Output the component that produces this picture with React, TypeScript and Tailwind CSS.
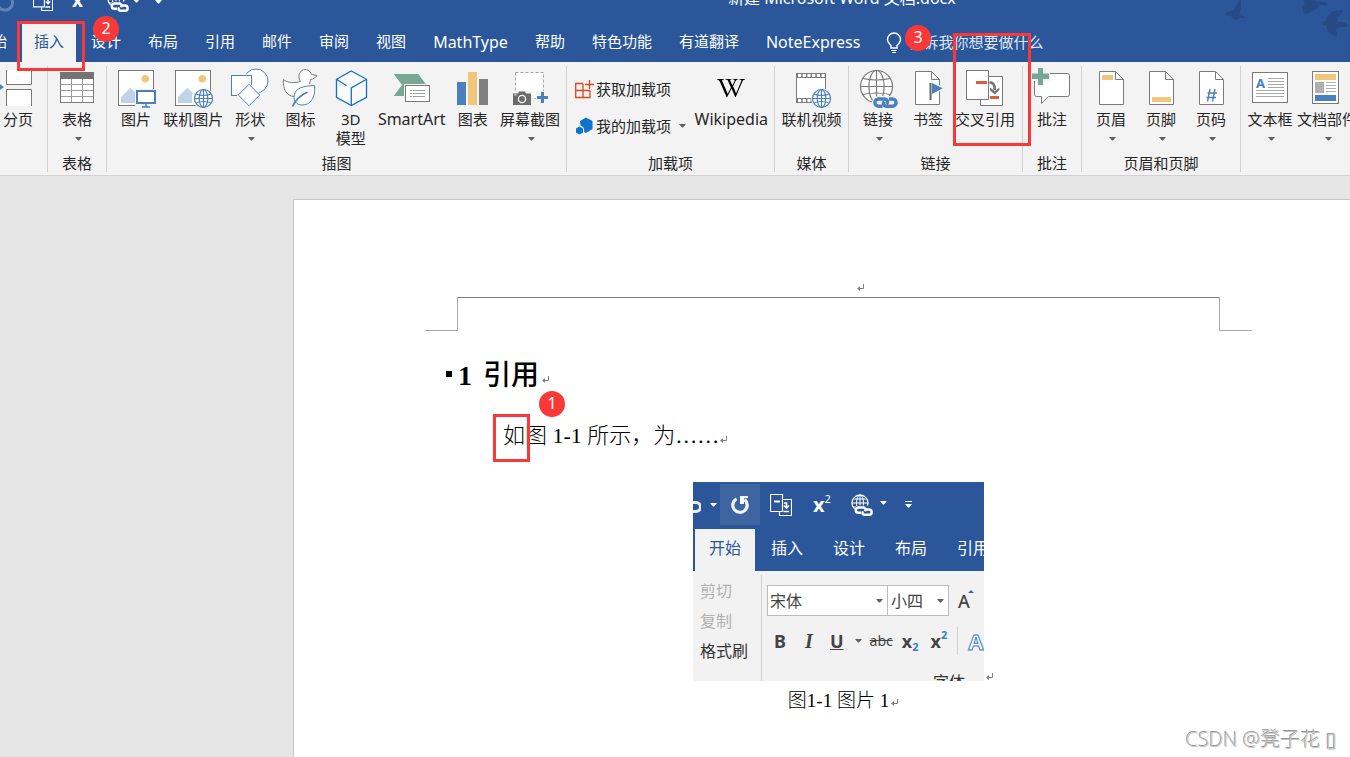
import React from "react";
import type { ReactNode } from "react";
import { FaWikipediaW } from "react-icons/fa";

const GRAY = "#7a7a7a";
const BLUE = "#4a80bd";
const GOLD = "#eec77c";
const GREEN = "#77a896";
const RED = "#d65f3e";

function Icon({ children }: { children: ReactNode }) {
  return (
    <svg viewBox="0 0 44 44" className="h-11 w-11 shrink-0 overflow-visible" fill="none" aria-hidden="true">
      {children}
    </svg>
  );
}

function Caret({ className = "text-[#5f5f5f]" }: { className?: string }) {
  return (
    <svg viewBox="0 0 7 4" className={`h-1 w-[7px] shrink-0 ${className}`} aria-hidden="true">
      <path d="M0 0H7L4 3.500H3Z" fill="currentColor" />
    </svg>
  );
}

function ReturnMark() {
  return (
    <svg viewBox="0 0 8 8" className="inline-block h-2 w-2 shrink-0" fill="none" aria-hidden="true">
      <path d="M6.500 0V4.500H2" stroke="#808080" />
      <path d="M0 4.500L3 2V7Z" fill="#808080" />
    </svg>
  );
}

function Globe({ cx, cy, r, color }: { cx: number; cy: number; r: number; color: string }) {
  const d = r * 0.5;
  const w = r * 0.86;
  return (
    <g stroke={color} strokeWidth={1.2}>
      <circle cx={cx} cy={cy} r={r} fill="#fff" />
      <ellipse cx={cx} cy={cy} rx={r * 0.48} ry={r} />
      <path d={`M${cx} ${cy - r}V${cy + r}M${cx - r} ${cy}H${cx + r}`} />
      <path d={`M${cx - w} ${cy - d}Q${cx} ${cy - d + 3} ${cx + w} ${cy - d}M${cx - w} ${cy + d}Q${cx} ${cy + d - 3} ${cx + w} ${cy + d}`} />
    </g>
  );
}

function PictureFrame() {
  return (
    <>
      <rect x="4.5" y="4.5" width="35" height="35" fill="#fff" stroke={GRAY} />
      <circle cx="31.3" cy="12.7" r="3.8" fill={GOLD} />
      <path d="M7 37V31L16.3 21.7L21 26V37Z" fill="#c0d3e8" />
    </>
  );
}

function Sheet() {
  return (
    <>
      <path d="M10.5 5.5H26.5L34.5 13.5V38.5H10.5Z" fill="#fff" stroke={GRAY} />
      <path d="M26.5 5.5V13.5H34.5" stroke={GRAY} />
    </>
  );
}

const icons: Record<string, ReactNode> = {
  pageBreak: (
    <Icon>
      <path d="M10.5 4V18.5H35.5V4" fill="#fff" stroke={GRAY} />
      <path d="M10.5 40V23.5H35.5V40" fill="#fff" stroke={GRAY} />
      <path d="M2 17L8 21L2 25.5Z" fill={BLUE} />
    </Icon>
  ),
  table: (
    <Icon>
      <rect x="5.5" y="6.5" width="33" height="30" fill="#fff" stroke={GRAY} />
      <rect x="5" y="6" width="34" height="7" fill="#737373" />
      <path d="M16.5 13V36M27.5 13V36M6 18.5H38M6 24.5H38M6 30.5H38" stroke="#9d9d9d" />
    </Icon>
  ),
  picture: (
    <Icon>
      <PictureFrame />
      <path d="M21 23H44V42H21Z" fill="#f3f3f3" />
      <rect x="23" y="25" width="18" height="12" fill="#fff" stroke={BLUE} strokeWidth="2" />
      <path d="M32 38V41M28 41H36" stroke={BLUE} strokeWidth="1.6" />
    </Icon>
  ),
  onlinePicture: (
    <Icon>
      <PictureFrame />
      <circle cx="32.5" cy="32.5" r="10.5" fill="#f3f3f3" />
      <Globe cx={32.5} cy={32.5} r={9} color={BLUE} />
    </Icon>
  ),
  shapes: (
    <Icon>
      <circle cx="28" cy="15" r="12" fill="#fff" stroke={BLUE} />
      <rect x="2" y="8" width="23" height="23" fill="#f3f3f3" />
      <rect x="3.5" y="9.5" width="20" height="20" fill="#fff" stroke={BLUE} />
      <path d="M21 16.5L33.5 29L21 41.5L8.5 29Z" fill="#f3f3f3" />
      <path d="M21 18.3L31.7 29L21 39.7L10.3 29Z" fill="#fff" stroke={BLUE} />
    </Icon>
  ),
  duck: (
    <Icon>
      <path
        d="M15 30.5C7 30 3.500 22 4.500 13.500C9 17.500 16 17 21.500 15.500C19.500 12.500 19.500 9 21 6.500C23 2.800 29 2.500 31.500 6.500L32.500 8.500L38 9.500C36.500 12 34 13 31.500 13.500L30.500 18"
        fill="#fff" stroke={GRAY} strokeLinejoin="round"
      />
      <path d="M35.500 19.500C26 20 15 21 15 31.500C15 35 17 37 19.500 38.500C30 41 37 33 35.500 19.500Z" fill="#fff" stroke={BLUE} />
      <path d="M13.500 40.500C16 35 22 29 28.500 26" stroke={BLUE} strokeWidth="1.800" />
    </Icon>
  ),
  cube: (
    <Icon>
      <path d="M22.300 5L37.500 13.300V31.300L22.300 39.500L7.500 31.300V13.300Z" fill="#fafafa" stroke="#1172c4" strokeWidth="1.300" />
      <path d="M7.500 13.300L17.700 19.700M37.500 13.300L22.300 22V39.500" stroke="#1172c4" strokeWidth="1.300" />
    </Icon>
  ),
  smartArt: (
    <Icon>
      <path d="M3.700 8H28.300L36.500 19H14V30H3.700L12 19Z" fill={GREEN} />
      <rect x="14" y="18" width="28" height="19" fill="#f3f3f3" />
      <rect x="15.500" y="19.500" width="24" height="16" fill="#fff" stroke={GRAY} />
      <path d="M20 24.500H22M20 27.500H22M20 30.500H22M23 24.500H35M23 27.500H35M23 30.500H35" stroke="#a0a0a0" />
    </Icon>
  ),
  chart: (
    <Icon>
      <path d="M6 16H15V39H6Z" fill={BLUE} />
      <path d="M17 6H26V39H17Z" fill={GOLD} />
      <path d="M28 13H37V39H28Z" fill="#808080" />
    </Icon>
  ),
  screenshot: (
    <Icon>
      <rect x="7.500" y="6.500" width="28" height="26" fill="#fff" stroke="#a5a5a5" strokeDasharray="3 2" />
      <path d="M4 28V25H24V40H4ZM28 25H41V39H28Z" fill="#f3f3f3" />
      <path d="M5 27.500H10L11 25.500H17L18 27.500H23V39H5Z" fill="#6b6b6b" />
      <circle cx="14" cy="33" r="3.600" stroke="#fff" strokeWidth="1.300" />
      <path d="M6.500 29H8.500" stroke="#fff" />
      <path d="M29 31.500H40M34.500 26V37" stroke={BLUE} strokeWidth="3" />
    </Icon>
  ),
  video: (
    <Icon>
      <rect x="7.500" y="7.500" width="29" height="29" fill="#fff" stroke={GRAY} />
      <rect x="7" y="7" width="30" height="5" fill={GRAY} />
      <rect x="7" y="32" width="16" height="5" fill={GRAY} />
      <path d="M9 9.500H36" stroke="#fff" strokeWidth="3" strokeDasharray="3.200 1.500" />
      <path d="M9 34.500H22" stroke="#fff" strokeWidth="3" strokeDasharray="3.200 1.500" />
      <circle cx="32.500" cy="32.500" r="10.500" fill="#f3f3f3" />
      <Globe cx={32.5} cy={32.5} r={9} color={BLUE} />
    </Icon>
  ),
  link: (
    <Icon>
      <Globe cx={20.5} cy={20.5} r={16} color={GRAY} />
      <path d="M16 36a6.500 6.500 0 0 1 6-6H37a6 6 0 0 1 6 7a6 6 0 0 1-6 6H22a6.500 6.500 0 0 1-6-7Z" fill="#f3f3f3" />
      <path d="M26.500 40.200H22.500A3.600 3.600 0 0 1 22.500 33H28C31.500 33 32.500 36 30.500 38" stroke={BLUE} strokeWidth="3.400" />
      <path d="M33 33H36.500A3.600 3.600 0 0 1 36.500 40.200H31C27.500 40.200 26.500 37.500 28.500 35.500" stroke={BLUE} strokeWidth="3.400" />
    </Icon>
  ),
  bookmark: (
    <Icon>
      <path d="M9.500 5.500H25.500L33.500 13.500V38.500H9.500Z" fill="#fff" stroke={GRAY} />
      <path d="M25.500 5.500V13.500H33.500" stroke={GRAY} />
      <path d="M26 15L39 22.300L26 30Z" fill="#f3f3f3" />
      <path d="M24.500 17V34" stroke="#666" strokeWidth="2" />
      <path d="M26 17L36.700 22.300L26 28Z" fill={BLUE} />
    </Icon>
  ),
  crossRef: (
    <Icon>
      <path d="M17.500 10.500H39.500V39.500H17.500Z" fill="#fff" stroke={GRAY} />
      <path d="M3.500 4.500H25.500V33.500H3.500Z" fill="#fff" stroke={GRAY} />
      <path d="M13 15H24V18H13ZM27 30H36V33H27Z" fill={RED} />
      <path d="M26.500 16.500C30.500 16.500 31.800 18.500 31.800 24" stroke="#777" strokeWidth="2.800" />
      <path d="M27 21.500L31.800 25L36.300 21.500V24L31.800 28.500L27 24.500Z" fill="#777" />
    </Icon>
  ),
  comment: (
    <Icon>
      <path d="M6.500 7.500H37.500Q39.500 7.500 39.500 9.500V28.500Q39.500 30.500 37.500 30.500H18.500L11.500 37.500V30.500H6.500Q4.500 30.500 4.500 28.500V9.500Q4.500 7.500 6.500 7.500Z" fill="#fff" stroke={GRAY} />
      <path d="M1 6H7V1H14V6H20V15H14V20H7V15H1Z" fill="#f3f3f3" />
      <path d="M2 7.500H8V2H13V7.500H19V13H13V19H8V13H2Z" fill={GREEN} />
    </Icon>
  ),
  header: (
    <Icon>
      <Sheet />
      <rect x="13" y="9" width="11" height="5" fill={GOLD} />
    </Icon>
  ),
  footer: (
    <Icon>
      <Sheet />
      <rect x="13" y="31" width="19" height="5" fill={GOLD} />
    </Icon>
  ),
  pageNumber: (
    <Icon>
      <Sheet />
      <path d="M21 23L18.500 35.500M26 23L23.500 35.500M18.500 27H28M17.500 31.500H27" stroke={BLUE} strokeWidth="1.400" />
    </Icon>
  ),
  textBox: (
    <Icon>
      <rect x="4.500" y="6.500" width="35" height="30" fill="#fff" stroke={GRAY} />
      <text x="8" y="22" fontSize="13" fontWeight="700" fill={BLUE} fontFamily="Noto Sans, sans-serif">A</text>
      <path d="M20 12.500H36M20 15.500H36M20 18.500H36M20 21.500H36M8 24.500H36M8 27.500H36M8 30.500H36" stroke="#a8a8a8" />
    </Icon>
  ),
  quickParts: (
    <Icon>
      <rect x="7.500" y="5.500" width="26" height="32" fill="#fff" stroke={GRAY} />
      <rect x="10" y="8" width="21" height="6" fill={GOLD} />
      <rect x="10" y="16" width="9" height="11" fill="#b0b0b0" />
      <path d="M21 16.500H31M21 19.500H31M21 22.500H31M21 25.500H31" stroke="#b0b0b0" />
      <rect x="10" y="29" width="21" height="6" fill={BLUE} />
    </Icon>
  ),
};

function Tool({ icon, label, second, menu, latin }: { icon: ReactNode; label: string; second?: string; menu?: boolean; latin?: boolean }) {
  return (
    <button type="button" className="flex min-w-[50px] shrink-0 flex-col items-center px-[2px]">
      {icon}
      <span className={latin ? "text-base leading-[19px]" : "leading-[19px]"}>{label}</span>
      {second && <span className="leading-[19px]">{second}</span>}
      {menu && (
        <span className="flex h-[19px] items-center pl-[3px]">
          <Caret />
        </span>
      )}
    </button>
  );
}

function Group({ label, width, children }: { label: string; width: string; children: ReactNode }) {
  return (
    <section
      aria-label={label || undefined}
      className={`flex shrink-0 flex-col justify-between border-r border-[#d0d0d0] px-1 ${width}`}
    >
      {children}
      <div className="h-[18px] text-center leading-[18px]">{label}</div>
    </section>
  );
}

const laterTabs = [
  { name: "设计" },
  { name: "布局" },
  { name: "引用" },
  { name: "邮件" },
  { name: "审阅" },
  { name: "视图" },
  { name: "MathType", latin: true },
  { name: "帮助" },
  { name: "特色功能" },
  { name: "有道翻译" },
  { name: "NoteExpress", latin: true },
];

function CrossRefGlyph({ className }: { className: string }) {
  return (
    <svg viewBox="0 0 22 22" className={className} fill="none" stroke="currentColor" aria-hidden="true">
      <path d="M.500 .500H12.500V17.500H.500ZM12.500 5.500H21.500V21.500H9.500V17.500" strokeWidth="1.200" />
      <path d="M4 7.500H10" strokeWidth="2" />
      <path d="M14 9H16.500V14M14 11.500L16.500 14L19 11.500M13.500 17.500H19" strokeWidth="1.600" />
    </svg>
  );
}

function WebLinkGlyph({ className }: { className: string }) {
  return (
    <svg viewBox="0 0 22 22" className={className} fill="none" stroke="currentColor" aria-hidden="true">
      <circle cx="9" cy="9" r="8" strokeWidth="1.300" />
      <ellipse cx="9" cy="9" rx="3.500" ry="8" />
      <path d="M1 9H17M9 1V17M2.500 5H15.500M2.500 13H15.500" />
      <path d="M3.500 16a4.500 4.500 0 0 1 4-4.500h9l5.500 4v6.500H8a4.500 4.500 0 0 1-4.500-6Z" fill="#2b579a" stroke="none" />
      <path d="M10 18.800H7.500A2.600 2.600 0 0 1 7.500 13.500H12.500Q15.500 14 14 17.200M14.500 15.500H18A2.600 2.600 0 0 1 18 20.800H13.500Q10.500 20.500 12 17.200" strokeWidth="2.400" />
    </svg>
  );
}

function Badge({ n, className }: { n: number; className: string }) {
  return (
    <span
      className={`absolute flex h-[26px] w-[26px] items-center justify-center rounded-full bg-[#fb3838] pb-[2px] text-base leading-none text-white ${className}`}
    >
      {n}
    </span>
  );
}

function TitleBar() {
  return (
    <div className="flex h-5 items-start text-white">
      <div className="flex w-[728px] shrink-0 items-start">
        <svg viewBox="0 0 18 20" className="-ml-1 h-5 w-[18px]" fill="none" aria-hidden="true">
          <path d="M2 0A7.500 7.500 0 1 0 16 0" stroke="#5f82b8" strokeWidth="3" />
        </svg>
        <CrossRefGlyph className="-mt-[10px] ml-[19px] h-[22px] w-5" />
        <span className="-mt-[11px] ml-[19px] text-[19px] font-bold leading-[22px]">x</span>
        <WebLinkGlyph className="-mt-[10px] ml-6 h-[22px] w-[22px]" />
        <span className="-mt-[1px] ml-[4px]"><Caret className="text-white" /></span>
        <span className="ml-[15px]"><Caret className="text-white" /></span>
      </div>
      <div className="-mt-3 whitespace-nowrap text-base leading-5">新建 Microsoft Word 文档.docx</div>
    </div>
  );
}

function Birds() {
  return (
    <svg viewBox="0 0 126 40" className="absolute right-0 top-0 h-10 w-[126px]" fill="#264b84" aria-hidden="true">
      <path d="M16 0L10 10L2 13L1 15L7 16L9 19L14 20L16 18L21 18L20 16L15 15L17 8V0Z" />
      <path d="M79 0L81 3L78 7L80 14L85 13L92 9L96 5L102 6L104 4L101 2L94 2L90 0Z" />
      <path d="M119 10L109 11L104 15L102 20L98 22L99 25L102 25L104 31L111 37L113 36L112 29L117 27L123 27L124 25L120 22L114 22L113 18L119 12Z" />
    </svg>
  );
}

function TabBar() {
  return (
    <div className="flex h-[42px] items-end">
      <nav className="-ml-[35px] flex shrink-0 items-end gap-[3px] text-white">
        <button type="button" className="h-[38px] px-3 pb-[3px]">开始</button>
        <button type="button" className="h-[38px] bg-[#f3f3f3] px-3 pb-[3px] text-[#2b579a]">插入</button>
        {laterTabs.map((t) => (
          <button
            key={t.name}
            type="button"
            className={t.latin ? "h-[38px] whitespace-nowrap px-3 pb-[3px] text-base" : "h-[38px] whitespace-nowrap px-3 pb-[3px]"}
          >
            {t.name}
          </button>
        ))}
      </nav>
      <label className="ml-[14px] flex h-[38px] shrink-0 items-center pb-[1px] text-white">
        <svg viewBox="0 0 16 22" className="h-[22px] w-4" fill="none" stroke="currentColor" aria-hidden="true">
          <path d="M5 16V13.500C3 11.500 1.500 10 1.500 7.500A6.500 6.500 0 0 1 14.500 7.500C14.500 10 13 11.500 11 13.500V16Z" strokeWidth="1.400" />
          <path d="M5 18.500H11M6 20.500H10" strokeWidth="1.200" />
        </svg>
        <input aria-label="告诉我你想要做什么" placeholder="告诉我你想要做什么" className="ml-[6px] w-40 bg-transparent placeholder:text-[#dfe6f1]" />
      </label>
    </div>
  );
}

function Ribbon() {
  return (
    <div className="border-b border-[#d2d2d2] bg-[#f3f3f3] pb-[3px] pt-1 text-[#262626]">
      <div className="flex h-[106px] overflow-hidden whitespace-nowrap">
        <Group label="" width="w-12">
          <div className="flex justify-end"><Tool icon={icons.pageBreak} label="分页" /></div>
        </Group>
        <Group label="表格" width="w-[59px]">
          <div className="flex"><Tool icon={icons.table} label="表格" menu /></div>
        </Group>
        <Group label="插图" width="w-[460px]">
          <div className="flex justify-between">
            <Tool icon={icons.picture} label="图片" />
            <Tool icon={icons.onlinePicture} label="联机图片" />
            <Tool icon={icons.shapes} label="形状" menu />
            <Tool icon={icons.duck} label="图标" />
            <Tool icon={icons.cube} label="3D" second="模型" />
            <Tool icon={icons.smartArt} label="SmartArt" latin />
            <Tool icon={icons.chart} label="图表" />
            <Tool icon={icons.screenshot} label="屏幕截图" menu />
          </div>
        </Group>
        <Group label="加载项" width="w-[208px]">
          <div className="flex justify-between">
            <div className="flex flex-col gap-[17px] pl-1 pt-[13px]">
              <button type="button" className="flex h-5 items-center gap-[2px]">
                <svg viewBox="0 0 19 19" className="h-[19px] w-[19px]" fill="none" stroke="#d8491f" strokeWidth="1.300" aria-hidden="true">
                  <path d="M8 3.500H.700V17.500H15V10.500M.700 10.500H15M8 3.500V17.500M10 4.500H19M14.500 0V9" />
                </svg>
                获取加载项
              </button>
              <button type="button" className="flex h-5 items-center gap-[2px]">
                <svg viewBox="0 0 19 19" className="h-[19px] w-[19px]" fill="#0d74cb" aria-hidden="true">
                  <path d="M11 .500L17.500 4V12L11 16L9 15A5 5 0 0 0 5.500 8.500L5 4Z" />
                  <path d="M4.500 9.500L8 11.500V15.500L4.500 17.500L1 15.500V11.500Z" />
                </svg>
                我的加载项
                <span className="ml-[6px]"><Caret /></span>
              </button>
            </div>
            <Tool
              icon={<span className="flex h-11 items-center text-black"><FaWikipediaW size={28} aria-hidden="true" /></span>}
              label="Wikipedia"
              latin
            />
          </div>
        </Group>
        <Group label="媒体" width="w-[74px]">
          <div className="flex justify-center"><Tool icon={icons.video} label="联机视频" /></div>
        </Group>
        <Group label="链接" width="w-[174px]">
          <div className="flex">
            <Tool icon={icons.link} label="链接" menu />
            <Tool icon={icons.bookmark} label="书签" />
            <Tool icon={icons.crossRef} label="交叉引用" />
          </div>
        </Group>
        <Group label="批注" width="w-[59px]">
          <div className="flex"><Tool icon={icons.comment} label="批注" /></div>
        </Group>
        <Group label="页眉和页脚" width="w-[159px]">
          <div className="flex">
            <Tool icon={icons.header} label="页眉" menu />
            <Tool icon={icons.footer} label="页脚" menu />
            <Tool icon={icons.pageNumber} label="页码" menu />
          </div>
        </Group>
        <Group label="" width="w-[200px]">
          <div className="flex">
            <Tool icon={icons.textBox} label="文本框" menu />
            <Tool icon={icons.quickParts} label="文档部件" menu />
          </div>
        </Group>
      </div>
    </div>
  );
}

function EmbeddedPicture() {
  return (
    <div className="flex h-[199px] w-[291px] flex-col overflow-hidden bg-[#f2f2f2] text-base text-[#444]">
      <div className="flex h-[47px] shrink-0 items-center bg-[#2b579a] pb-[2px] text-white">
        <svg viewBox="0 0 8 20" className="mt-1 h-5 w-2" fill="none" aria-hidden="true">
          <path d="M0 5.500H3A4 4 0 0 1 3 14.500H0" stroke="#e8eef7" strokeWidth="3" />
        </svg>
        <span className="ml-[9px]"><Caret className="text-white" /></span>
        <span className="ml-[3px] flex h-[41px] w-10 items-center justify-center bg-[#3e659f]">
          <svg viewBox="0 0 20 20" className="h-5 w-5" fill="none" aria-hidden="true">
            <path d="M6.500 3.800A7.200 7.200 0 1 0 14.500 4.500" stroke="#f2f5fa" strokeWidth="3.200" />
            <path d="M10 1H18V3L14 3.500V9H10Z" fill="#f2f5fa" />
          </svg>
        </span>
        <CrossRefGlyph className="ml-[10px] h-[22px] w-[22px]" />
        <span className="ml-[21px] text-xl font-bold leading-6">x</span>
        <span className="mb-3 text-[11px] leading-3">2</span>
        <WebLinkGlyph className="ml-5 h-[22px] w-[22px]" />
        <span className="ml-[7px] mb-1"><Caret className="text-white" /></span>
        <span className="ml-[18px] flex flex-col gap-[2px]">
          <span className="h-px w-[7px] bg-white" />
          <Caret className="text-white" />
        </span>
      </div>
      <div className="flex h-[42px] shrink-0 gap-[2px] bg-[#2b579a] pl-[2px] text-white">
        <span className="flex shrink-0 items-center bg-[#f2f2f2] px-[14px] pb-1 text-[#2b579a]">开始</span>
        {["插入", "设计", "布局", "引用"].map((t) => (
          <span key={t} className="flex shrink-0 items-center px-[14px] pb-1">{t}</span>
        ))}
      </div>
      <div className="flex flex-1">
        <div className="mt-1 flex w-[69px] shrink-0 flex-col gap-[6px] border-r border-[#d2d2d2] pl-[7px] leading-6 text-[#b0b0b0]">
          <span className="mt-1">剪切</span>
          <span>复制</span>
          <span className="text-[#333]">格式刷</span>
        </div>
        <div className="shrink-0 pl-[5px] pt-[14px]">
          <div className="flex items-center">
            <span className="relative flex items-center">
              <select aria-label="字体" className="h-[31px] w-[121px] appearance-none border border-[#bcbcbc] bg-white pl-[2px]">
                <option>宋体</option>
              </select>
              <span className="pointer-events-none absolute right-[5px] flex"><Caret /></span>
            </span>
            <span className="relative -ml-px flex items-center">
              <select aria-label="字号" className="h-[31px] w-[62px] appearance-none border border-[#bcbcbc] bg-white pl-[3px]">
                <option>小四</option>
              </select>
              <span className="pointer-events-none absolute right-[5px] flex"><Caret /></span>
            </span>
            <span className="ml-[9px] text-lg font-medium leading-6">A</span>
            <svg viewBox="0 0 6 3" className="-ml-[2px] mb-[18px] h-[3px] w-[6px]" aria-hidden="true"><path d="M0 3L3 0L6 3Z" fill="#2b6cb5" /></svg>
          </div>
          <div className="mt-[11px] flex h-7 items-center pl-[7px] text-lg leading-6">
            <span className="w-[11px] font-bold">B</span>
            <span className="ml-5 w-[11px] font-['Liberation_Serif',serif] text-xl font-bold italic">I</span>
            <span className="ml-[14px] font-bold underline">U</span>
            <span className="ml-[11px]"><Caret /></span>
            <span className="ml-2 text-sm line-through">abc</span>
            <span className="ml-[9px] font-bold">x</span>
            <span className="mt-3 text-[11px] font-bold text-[#3c7fc0]">2</span>
            <span className="ml-3 font-bold">x</span>
            <span className="mb-3 text-[11px] font-bold text-[#3c7fc0]">2</span>
            <span className="ml-[10px] h-7 w-px bg-[#d2d2d2]" />
            <span className="ml-[10px] text-[22px] font-bold text-white [-webkit-text-stroke:1px_#3c7fc0]">A</span>
          </div>
          <div className="mt-[17px] pl-[166px] leading-5 text-[#333]">字体</div>
        </div>
      </div>
    </div>
  );
}

function DocumentPage() {
  return (
    <main className="ml-[293px] mt-[23px] flex-1 border-l border-t border-[#c6c6c6] bg-white font-['Liberation_Serif','Noto_Sans_CJK_SC',serif] text-black">
      <div className="ml-[131px] w-[827px]">
        <div className="flex h-[97px] items-end justify-center pb-[5px] pl-[45px]"><ReturnMark /></div>
        <div className="flex h-[34px]">
          <div className="w-[33px] border-b border-r border-[#a8a8a8]" />
          <div className="flex-1 border-t border-[#808080]" />
          <div className="w-[33px] border-b border-l border-[#a8a8a8]" />
        </div>
        <div className="ml-[21px]">
          <h1 className="mt-[25px] flex h-10 items-center gap-[6px] text-[28px] font-bold leading-10">
            <span className="-mt-1 h-[6px] w-[6px] bg-black" />
            <span className="flex items-center">
              1 <span className="ml-[11px] font-medium">引用</span>
              <span className="ml-[3px] mt-2 flex"><ReturnMark /></span>
            </span>
          </h1>
          <p className="relative ml-[57px] mt-5 flex h-10 items-center text-[22px] font-light leading-10">
            如图 1-1 所示，为……
            <span className="ml-px mt-2 flex"><ReturnMark /></span>
            <span className="absolute -left-[10px] -top-[2px] h-12 w-[37px] border-[3px] border-[#fb3838]" />
            <Badge n={1} className="-top-[25px] left-9 font-['Noto_Sans',sans-serif] font-normal" />
          </p>
        </div>
        <figure className="ml-[268px] mt-[26px] w-fit">
          <div className="flex items-end font-['Noto_Sans','Noto_Sans_CJK_SC',sans-serif]">
            <EmbeddedPicture />
            <span className="ml-[2px] flex"><ReturnMark /></span>
          </div>
          <figcaption className="mt-[7px] flex items-center justify-center text-[19px] font-light leading-[26px]">
            图1-1 图片 1<span className="ml-[2px] mt-1 flex"><ReturnMark /></span>
          </figcaption>
        </figure>
      </div>
    </main>
  );
}

export default function App() {
  return (
    <div className="relative flex h-screen flex-col overflow-hidden bg-[#e6e6e6] font-['Noto_Sans','Noto_Sans_CJK_SC',sans-serif] text-[15px]">
      <header className="relative shrink-0 overflow-hidden bg-[#2b579a]">
        <Birds />
        <TitleBar />
        <TabBar />
      </header>
      <Ribbon />
      <DocumentPage />
      <span className="absolute left-[17px] top-[21px] h-[50px] w-[68px] border-[3px] border-[#fb3838]" />
      <Badge n={2} className="left-[93px] top-4" />
      <span className="absolute left-[953px] top-[33px] h-[113px] w-[78px] border-[3px] border-[#fb3838]" />
      <Badge n={3} className="left-[905px] top-[25px]" />
      <div className="absolute bottom-[2px] right-[13px] font-['Open_Sans','Noto_Sans_CJK_SC',sans-serif] text-xl font-light leading-[30px] text-[#c4c4c4] [text-shadow:-1px_-1px_0_#959595]">
        CSDN @凳子花 ▯
      </div>
    </div>
  );
}
